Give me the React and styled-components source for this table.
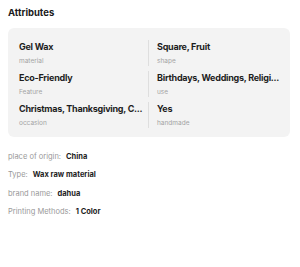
import React from "react";
import styled, { createGlobalStyle } from "styled-components";

const Global = createGlobalStyle`
  body {
    margin: 0;
    background: #fff;
    font-family: "Inter", "Noto Sans", sans-serif;
    color: #222;
  }
`;

const Page = styled.div`
  padding: 7px 8px 0 8px;
  width: 300px;
  box-sizing: border-box;
`;

const Title = styled.h3`
  font-size: 9.5px;
  line-height: 12px;
  font-weight: 700;
  margin: 0 0 9px 0;
  color: #1a1a1a;
`;

const Card = styled.div`
  background: #f3f3f3;
  border-radius: 6px;
  padding: 12px 0 9px 0;
  display: grid;
  grid-template-columns: 1fr 1fr;
  row-gap: 5px;
  width: 282px;
  box-sizing: border-box;
`;

const Cell = styled.div`
  padding: ${p => (p.left ? "0 6px 0 11px" : "0 6px 0 8px")};
  border-right: ${p => (p.left ? "1px solid #dedede" : "none")};
  min-width: 0;
`;

const Value = styled.div`
  font-size: 9px;
  line-height: 14px;
  font-weight: 700;
  letter-spacing: -0.25px;
  color: #1d1d1d;
  white-space: nowrap;
`;

const Label = styled.div`
  font-size: 6.5px;
  line-height: 10px;
  color: #a3a3a3;
  margin-top: 2px;
`;

const Specs = styled.div`
  display: flex;
  flex-direction: column;
  gap: 6.3px;
  padding-top: 14px;
`;

const Spec = styled.div`
  font-size: 7.5px;
  line-height: 12px;
  color: #999;
`;

const SpecValue = styled.span`
  color: #1d1d1d;
  font-weight: 700;
  margin-left: 5px;
`;

const attrs = [
  ["Gel Wax", "material", "Square, Fruit", "shape"],
  ["Eco-Friendly", "Feature", "Birthdays, Weddings, Religi...", "use"],
  ["Christmas, Thanksgiving, C...", "occasion", "Yes", "handmade"],
];

const specs = [
  ["place of origin:", "China"],
  ["Type:", "Wax raw material"],
  ["brand name:", "dahua"],
  ["Printing Methods:", "1 Color"],
];

export default function App() {
  return (
    <Page>
      <Global />
      <Title>Attributes</Title>
      <Card>
        {attrs.map(([v1, l1, v2, l2]) => (
          <React.Fragment key={v1}>
            <Cell left>
              <Value>{v1}</Value>
              <Label>{l1}</Label>
            </Cell>
            <Cell>
              <Value>{v2}</Value>
              <Label>{l2}</Label>
            </Cell>
          </React.Fragment>
        ))}
      </Card>
      <Specs>
        {specs.map(([k, v]) => (
          <Spec key={k}>
            {k}
            <SpecValue>{v}</SpecValue>
          </Spec>
        ))}
      </Specs>
    </Page>
  );
}
